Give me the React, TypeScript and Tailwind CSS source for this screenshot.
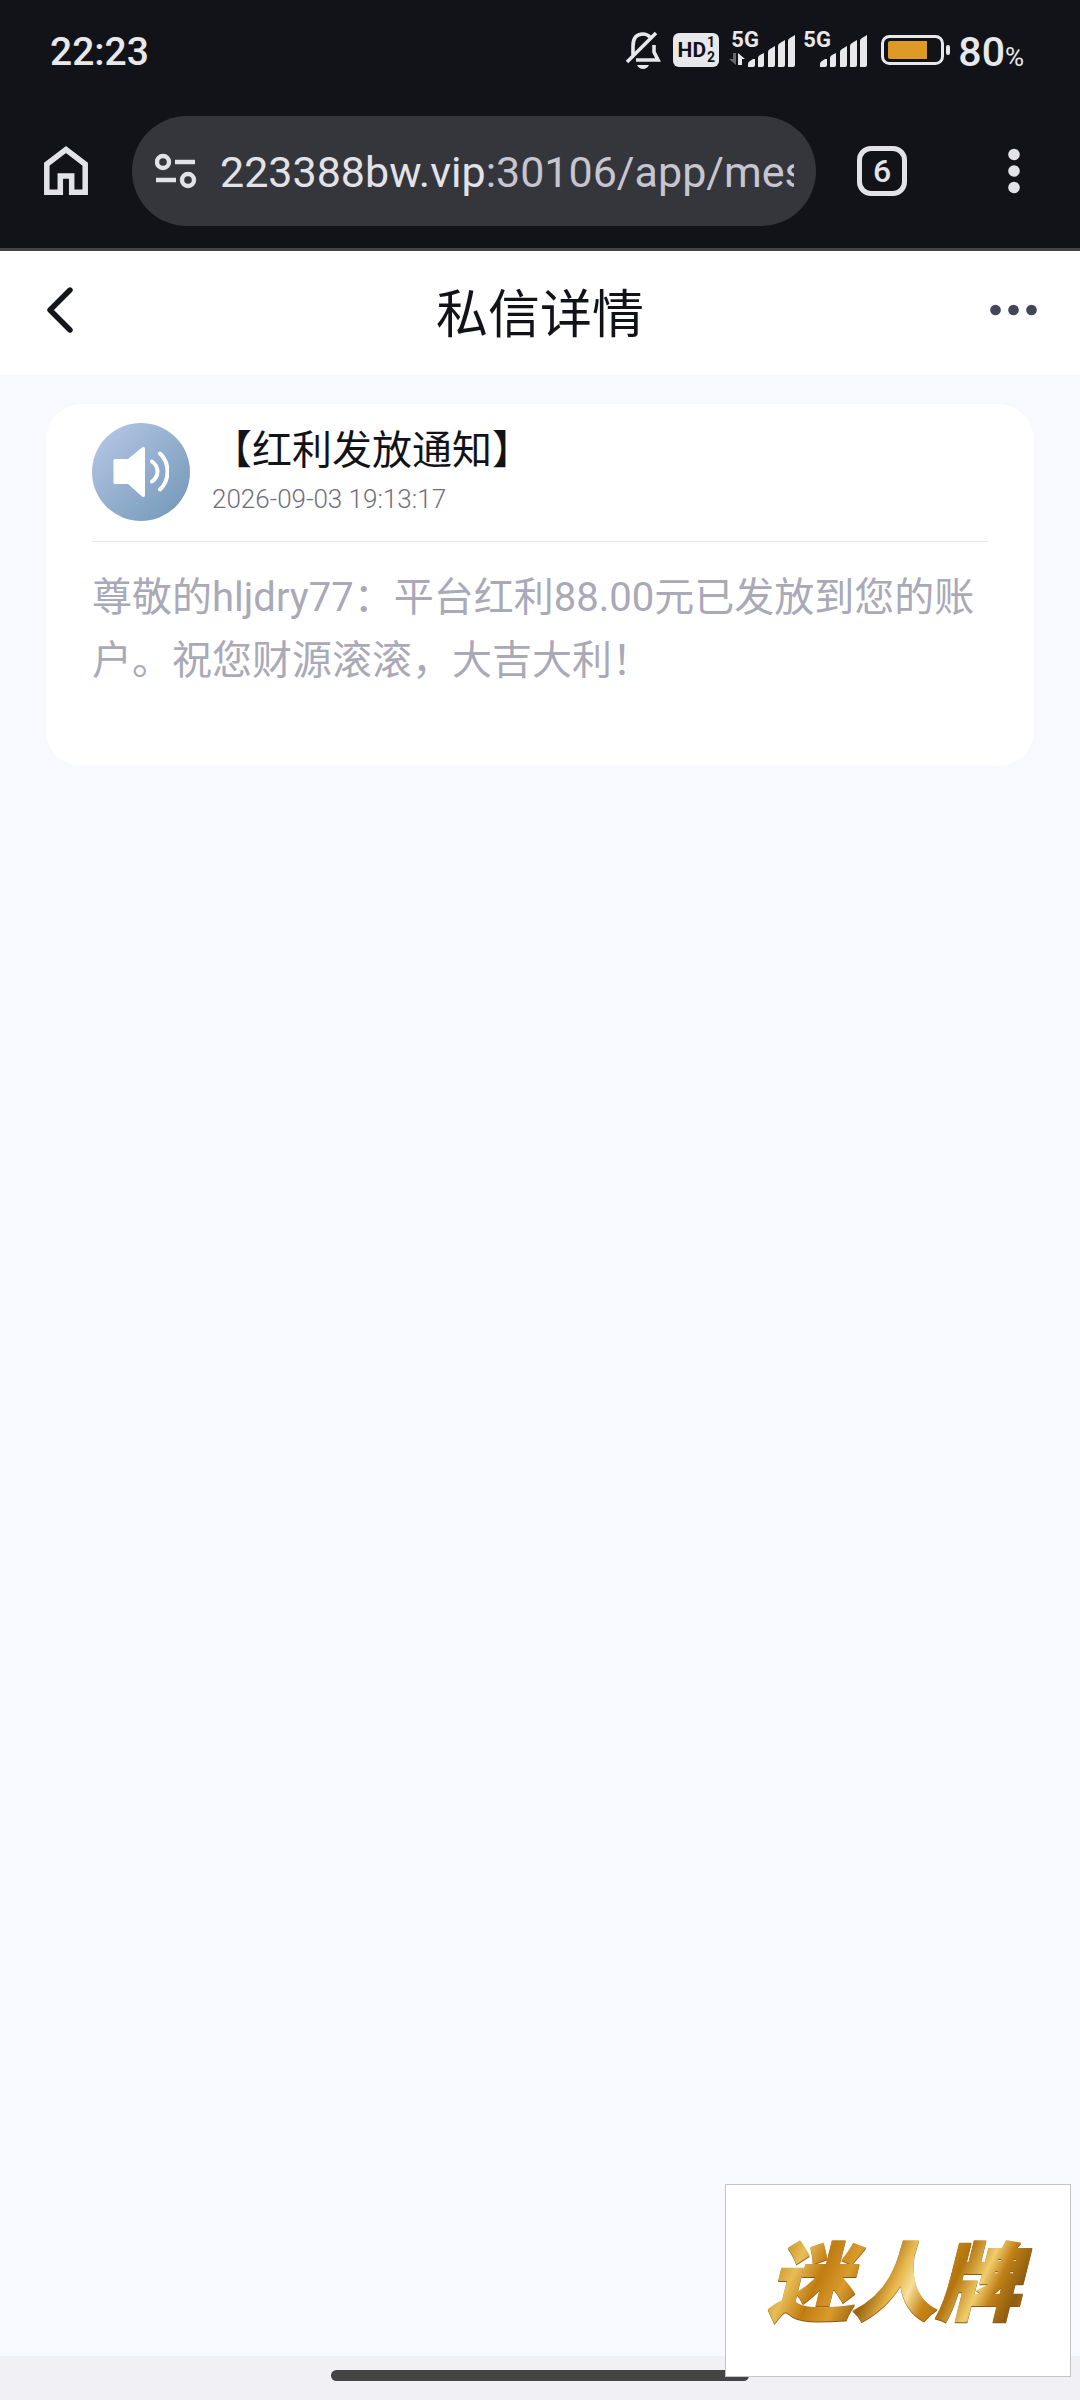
const message = {
  title: '【红利发放通知】',
  time: '2026-09-03 19:13:17',
  body: '尊敬的hljdry77：平台红利88.00元已发放到您的账户。祝您财源滚滚，大吉大利！',
};

function Signal() {
  return (
    <svg className="h-[38px] w-[68px]" viewBox="0 0 68 38" fill="currentColor" aria-hidden="true">
      <path d="M21 36v-3q0-2 2-3l3-2h2v6q0 2-2 2z" />
      <path d="M31 36V27q0-2 2-3l4-2v12q0 2-2 2z" />
      <path d="M41 36V21q0-2 2-3l5-3v19q0 2-2 2z" />
      <path d="M51 36V15q0-2 2-3l5-3v25q0 2-2 2z" />
      <path d="M61 36V10q0-2 2-3l5-3v30q0 2-2 2z" />
    </svg>
  );
}

function StatusBar() {
  return (
    <div className="flex h-[100px] items-center justify-between pr-14 pl-[50px] text-[#e8e8ea]">
      <span className="pt-1 text-[39px] leading-none font-medium">22:23</span>

      <div className="flex items-center">
        {/* Muted bell */}
        <svg className="mr-3 h-[38px] w-[36px]" viewBox="0 0 36 38" fill="none" stroke="currentColor" strokeWidth="3.6" aria-hidden="true">
          <path d="M8 24V15q0-12 10-12q4 0 7 3M29 14v7l4 8H11" />
          <path d="M2 31L31 2" />
          <path d="M12 34h12q-2 4-6 4t-6-4z" fill="currentColor" stroke="none" />
        </svg>

        {/* HD 1/2 */}
        <div className="mr-2 flex h-[34px] w-[46px] items-center justify-center gap-px rounded-md bg-[#e8e8ea] text-[#121318]">
          <span className="text-[21px] leading-none font-bold">HD</span>
          <span className="flex flex-col text-sm leading-[15px] font-bold">
            <span>1</span>
            <span>2</span>
          </span>
        </div>

        <div className="relative mr-1">
          <span className="absolute top-0 left-1 text-[22px] leading-[18px] font-bold">5G</span>
          <svg className="absolute top-[22px] left-[2px] h-3 w-4" viewBox="0 0 16 12" fill="currentColor" aria-hidden="true">
            <path d="M7 0v12L0 6h4V0z" opacity="0.4" />
            <path d="M9 12V0l7 6h-3v6z" />
          </svg>
          <Signal />
        </div>
        <div className="relative mr-3.5">
          <span className="absolute top-0 left-1 text-[22px] leading-[18px] font-bold">5G</span>
          <Signal />
        </div>

        <svg className="mr-2 h-[30px] w-[69px]" viewBox="0 0 69 30" fill="none" aria-hidden="true">
          <rect x="1.5" y="1.5" width="60" height="27" rx="7" stroke="currentColor" strokeWidth="3" />
          <path d="M9 6h37v18H9q-2 0-2-2V8q0-2 2-2z" fill="#dd9a26" />
          <rect x="65" y="10" width="4" height="10" rx="2" fill="currentColor" />
        </svg>
        <span className="flex items-baseline pt-1 leading-none font-medium">
          <span className="text-[41px]">80</span>
          <span className="text-[26px] leading-none font-normal">%</span>
        </span>
      </div>
    </div>
  );
}

function AddressBar() {
  return (
    <div className="flex items-center border-b-3 border-[#444447] pt-4 pr-[60px] pb-[22px] pl-11 text-[#e3e2e9]">
      <button type="button" aria-label="Home" className="mr-11">
        <svg className="h-[50px] w-11" viewBox="0 0 44 50" fill="none" stroke="currentColor" strokeWidth="5.5">
          <path d="M2.8 46.2V18.2L22 3.5l19.2 14.7v28H27.7V30H16.3v16.2z" />
        </svg>
      </button>

      <div className="flex h-[110px] min-w-0 flex-1 items-center rounded-full bg-[#35363b] pr-[22px] pl-[23px]">
        <button type="button" aria-label="Site information" className="mr-[23px] shrink-0">
          <svg className="h-9 w-[42px]" viewBox="0 0 42 36" fill="none" stroke="currentColor" strokeWidth="4.4">
            <circle cx="8" cy="9" r="6" />
            <path d="M20 9h20M1 27h20" />
            <circle cx="33" cy="27" r="6" />
          </svg>
        </button>
        <a href="#" className="min-w-0 flex-1 overflow-hidden pt-0.5 text-[43px] leading-[60px] whitespace-nowrap text-[#c6c5d0]">
          <span className="text-[#e3e2e9]">223388bw.vip</span>:30106/app/mes
        </a>
      </div>

      <button
        type="button"
        aria-label="Tabs"
        className="mr-[101px] ml-[41px] flex size-[50px] items-center justify-center rounded-[14px] border-[5px] border-current text-[32px] leading-none font-medium"
      >
        6
      </button>
      <button type="button" aria-label="More options">
        <svg className="h-[46px] w-3" viewBox="0 0 12 46" fill="currentColor">
          <circle cx="6" cy="6.5" r="5.8" />
          <circle cx="6" cy="23" r="5.8" />
          <circle cx="6" cy="39.5" r="5.8" />
        </svg>
      </button>
    </div>
  );
}

function PageHeader() {
  return (
    <header className="flex h-[124px] items-center justify-between bg-white pr-[43px] pb-1.5 pl-[46px]">
      <button type="button" aria-label="返回" className="w-11">
        <svg className="h-[46px] w-[27px]" viewBox="0 0 27 46" fill="none" stroke="#15161b" strokeWidth="5.4" strokeLinecap="round" strokeLinejoin="round">
          <path d="M24 3L4 23l20 20" />
        </svg>
      </button>
      <h1 className="pt-3 text-[52px] leading-none text-[#121318]">私信详情</h1>
      <button type="button" aria-label="更多">
        <svg className="h-3 w-[47px]" viewBox="0 0 47 12" fill="#424656">
          <circle cx="5.5" cy="6" r="5.3" />
          <circle cx="23.5" cy="6" r="5.3" />
          <circle cx="41.5" cy="6" r="5.3" />
        </svg>
      </button>
    </header>
  );
}

function MessageCard() {
  return (
    <article className="mx-[46px] mt-[29px] rounded-[36px] bg-white px-[46px] pt-[19px] pb-[74px]">
      <div className="flex items-center border-b border-[#e3e8ea] pb-5">
        <div className="mr-[22px] flex size-[98px] shrink-0 items-center justify-center rounded-full bg-linear-135 from-[#b9c9e8] to-[#7096b6]">
          <svg className="h-[52px] w-14" viewBox="0 0 56 52" fill="none" aria-hidden="true">
            <path d="M2 13h13L29 1.5q3-1.5 3 1.5v46q0 3-3 1.5L15 38H2q-1.5 0-1.5-1.5v-22Q.5 13 2 13z" fill="#fff" />
            <path d="M39 15.5q5.5 4 5.5 10t-5.5 10M47 7.5q7.5 7 7.5 18t-7.5 18" stroke="#fff" strokeWidth="4" strokeLinecap="round" />
          </svg>
        </div>
        <div className="pt-0.5">
          <h2 className="text-[40px] leading-[52px] text-[#121318]">{message.title}</h2>
          <time className="block text-[26px] leading-[44px] font-light text-[#6f6f80]">{message.time}</time>
        </div>
      </div>
      <p className="pt-6 text-[40px] leading-[63px] text-[#a9a9b8]">{message.body}</p>
    </article>
  );
}

export default function App() {
  return (
    <div lang="zh-CN" className="relative flex min-h-screen flex-col bg-[#f8f9ff] font-['Roboto','Noto_Sans_CJK_SC',sans-serif]">
      <div className="bg-[#121318]">
        <StatusBar />
        <AddressBar />
      </div>
      <PageHeader />

      <main className="flex-1">
        <MessageCard />
      </main>

      {/* System gesture bar */}
      <div className="flex h-11 justify-center bg-[#f1f0f5] pt-3.5">
        <div className="h-[11px] w-[418px] rounded-full bg-[#444444]" />
      </div>

      {/* Watermark */}
      <div className="absolute right-[9px] bottom-[23px] flex h-[193px] w-[346px] items-center justify-center border border-[#c4c4c8] bg-white pt-2">
        <span className="bg-[linear-gradient(115deg,#a06a10_0%,#b97a14_8%,#e8bd55_18%,#c07c12_26%,#d99b2c_34%,#9c6410_42%,#e6b548_49%,#f6e09a_54%,#c98618_60%,#b3740f_66%,#f0cd6c_74%,#c08018_79%,#8f5c10_86%,#c4871c_93%,#a06a10_100%)] bg-clip-text pr-6 pl-4 text-[84px] leading-[110px] font-black text-transparent italic drop-shadow-[0_1px_0_#8a5a12] [-webkit-text-stroke:2px_transparent]">
          迷人牌
        </span>
      </div>
    </div>
  );
}
